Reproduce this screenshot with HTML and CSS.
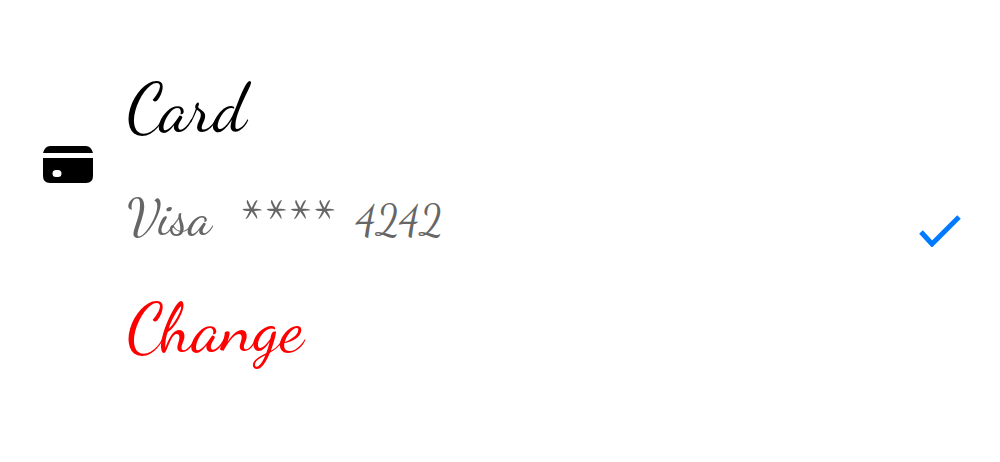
FILE: index.html
```html
<!DOCTYPE html>
<html lang="en">
<head>
<meta charset="utf-8">
<title>Payment method</title>
<link rel="stylesheet" href="styles.css">
</head>
<body>
<main class="payment">
  <svg class="card-icon" viewBox="0 0 50 38" aria-hidden="true">
    <path d="M7 0H43Q48 0 50 7H0Q2 0 7 0Z"/>
    <path fill-rule="evenodd" d="M0 12H50V30Q50 37 43 37H7Q0 37 0 30ZM13 24A3 3 0 0 0 13 31H15A3 3 0 0 0 15 24Z"/>
  </svg>
  <div class="details">
    <h1 class="title">Card</h1>
    <p class="number">Visa <span class="mask">****</span> <span class="digits">4242</span></p>
    <button class="change" type="button">Change</button>
  </div>
  <svg class="check" viewBox="0 0 42 32" aria-hidden="true"><path d="M2 17L13 29L40 2"/></svg>
</main>
</body>
</html>
```
FILE: styles.css
```css
body {
  margin: 0;
  background: #fff;
  font-family: "Dancing Script", "Segoe Script", cursive;
}
.payment {
  display: flex;
  align-items: center;
  gap: 34px;
  min-height: 100vh;
  box-sizing: border-box;
  padding: 0 39px 0 43px;
}
.card-icon {
  width: 50px;
  height: 38px;
  margin-bottom: 132px;
}
.details {
  flex: 1;
  display: flex;
  flex-direction: column;
  align-items: flex-start;
  padding-bottom: 26px;
}
.title, .number, .change {
  margin: 0;
  padding: 0;
  line-height: 110px;
  font-weight: 400;
  white-space: nowrap;
}
.title, .change { font-size: 68px; }
.title { color: #000; }
.number { color: #666; font-size: 52px; }
.mask {
  margin: 0 10px;
  font-size: 62px;
  line-height: 1;
  vertical-align: sub;
}
.digits { font-size: 42px; line-height: 1; }
.change {
  border: 0;
  background: none;
  color: #f00;
  font-family: inherit;
}
.check {
  width: 42px;
  height: 32px;
  fill: none;
  stroke: #007aff;
  stroke-width: 5;
}
```
